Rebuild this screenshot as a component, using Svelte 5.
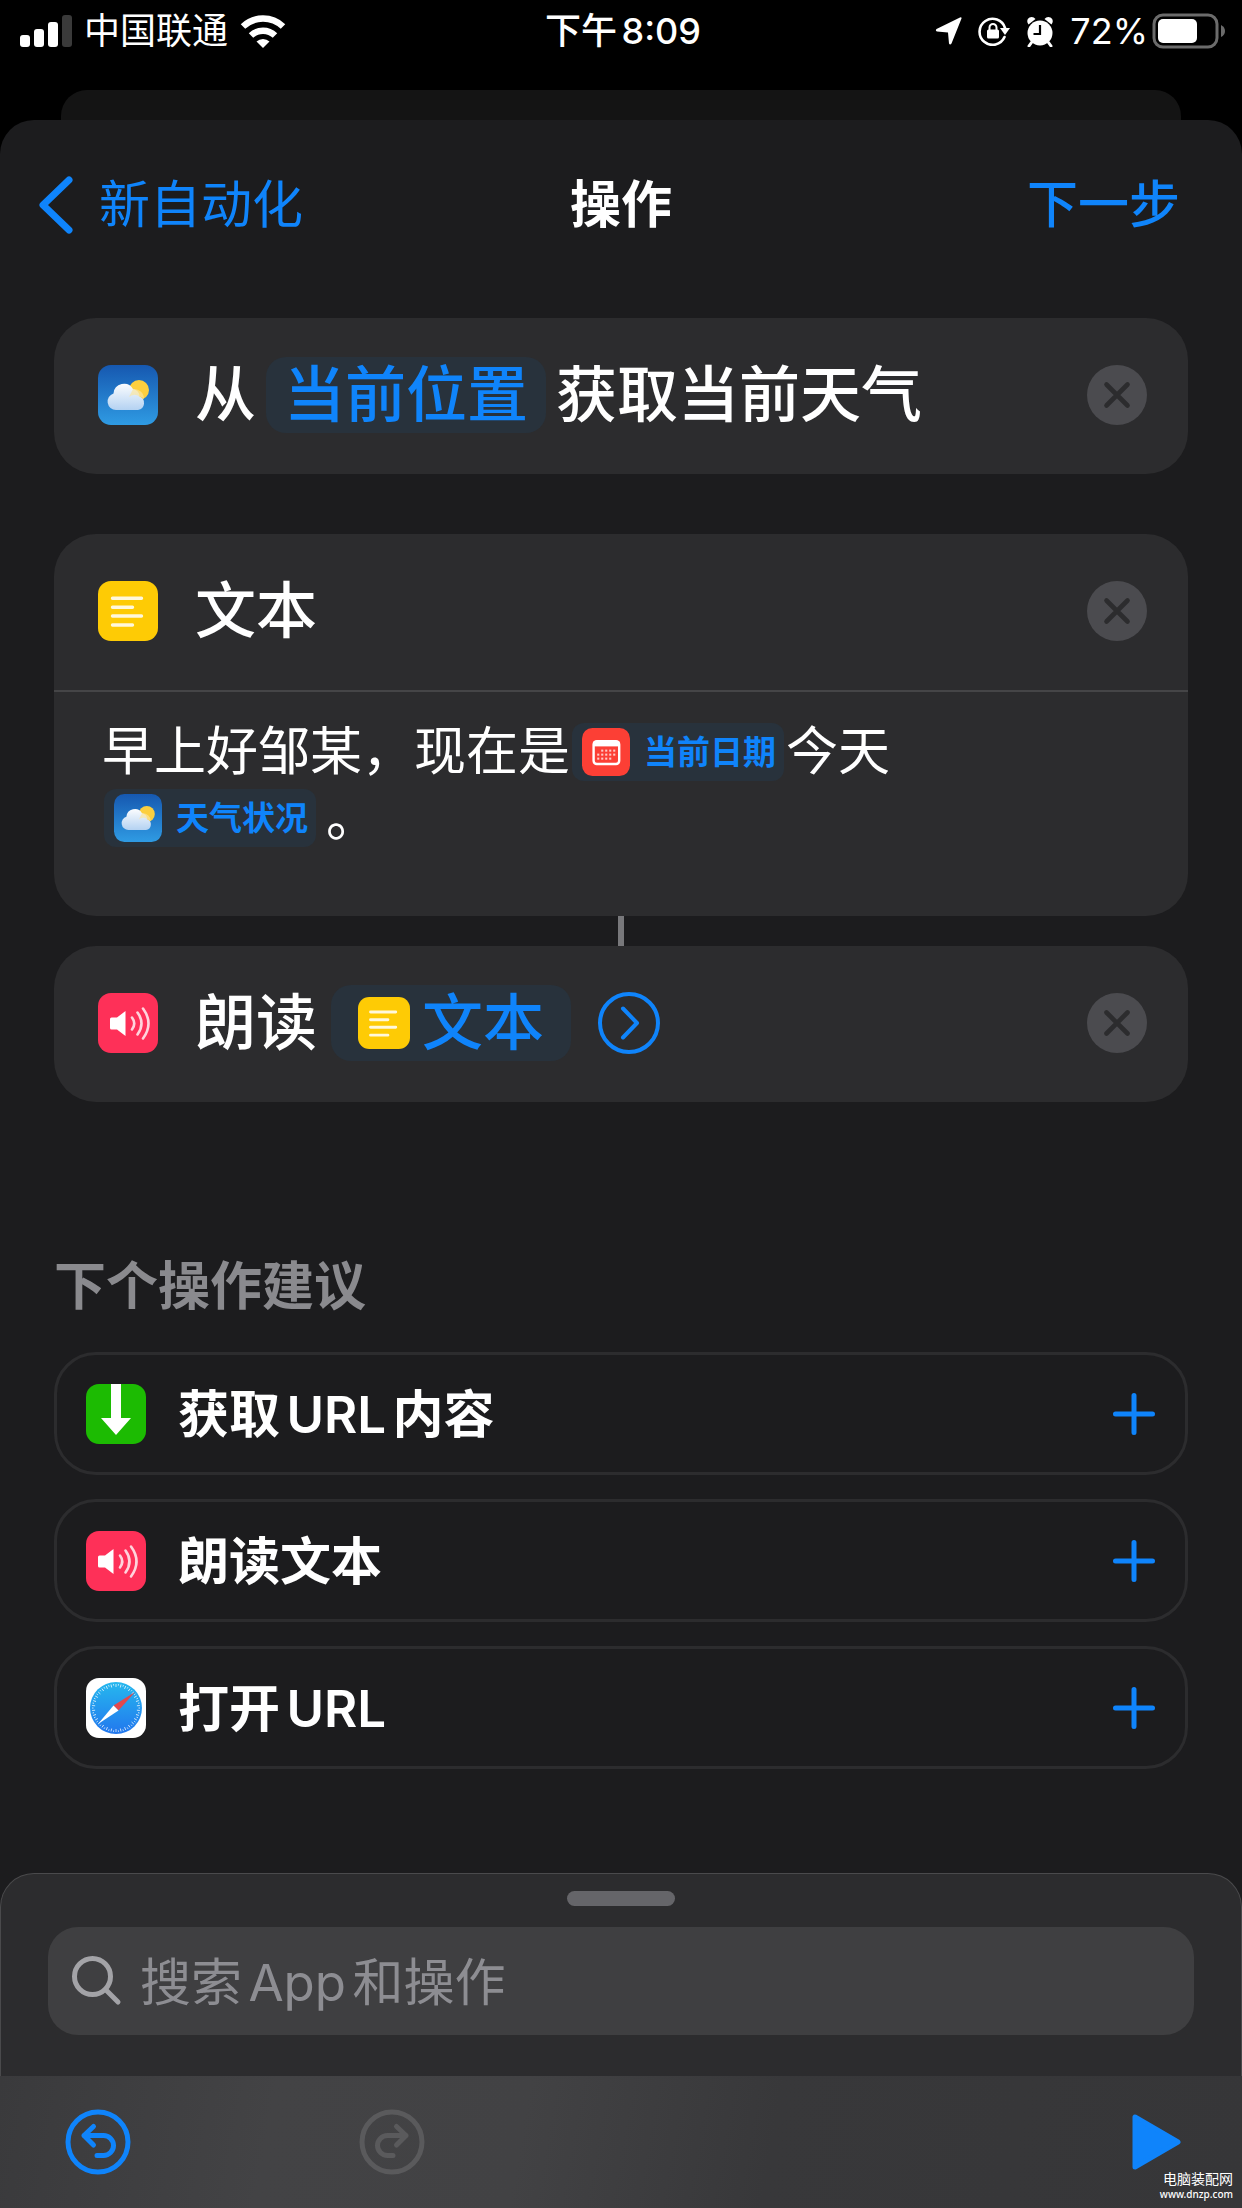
<script lang="ts">
  type Suggestion = { id: string; icon: string; label: string };

  const suggestions: Suggestion[] = [
    { id: "fetch", icon: "download", label: "获取URL内容" },
    { id: "speak", icon: "speaker", label: "朗读文本" },
    { id: "open", icon: "safari", label: "打开URL" },
  ];

  const ticks = Array.from({ length: 60 }, (_, i) => i * 6);

  // calendar day dots, first and last weeks are partial
  const days = [
    [1, 0], [2, 0], [3, 0], [4, 0],
    [0, 1], [1, 1], [2, 1], [3, 1], [4, 1],
    [0, 2], [1, 2], [2, 2], [3, 2],
  ];

  let query = $state("");
</script>

{#snippet appIcon(name: string)}
  <svg class="app-icon" viewBox="0 0 60 60" aria-hidden="true">
    {#if name === "weather"}
      <defs>
        <linearGradient id="sky" x1="0" y1="0" x2="0" y2="1">
          <stop offset="0" stop-color="#1658b0" />
          <stop offset="1" stop-color="#2f9be3" />
        </linearGradient>
        <linearGradient id="cloud" x1="0" y1="0" x2="0" y2="1">
          <stop offset="0" stop-color="#fbfcfe" />
          <stop offset="1" stop-color="#b4d2f2" />
        </linearGradient>
      </defs>
      <rect width="60" height="60" rx="13" fill="url(#sky)" />
      <circle cx="41" cy="25" r="10" fill="#fccf3f" />
      <path
        d="M18 45a8.500 8.500 0 0 1-2.500-16.600 10.500 10.500 0 0 1 19.500-4.400 8 8 0 0 1 6.500 7.500A7 7 0 0 1 40 45z"
        fill="url(#cloud)"
      />
      <path d="M31 32a8 8 0 0 1 10.500-.5A7 7 0 0 1 46 34a10 10 0 0 0-11-10z" fill="#fbe6a0" opacity="0.7" />
    {:else if name === "text"}
      <rect width="60" height="60" rx="13" fill="#fecb05" />
      <path
        d="M14.500 17.200h29M14.500 26.200h20M14.500 35h29M14.500 44h20"
        stroke="#fff8dc"
        stroke-width="3.400"
        stroke-linecap="round"
      />
    {:else if name === "speaker"}
      <rect width="60" height="60" rx="13" fill="#fe3058" />
      <path d="M12 26q0-1.500 1.500-1.500H19l8.500-6.500v25L19 36.500h-5.500Q12 36.500 12 35z" fill="#fff" />
      <path
        d="M34 24.500q4.500 6 0 12M39.500 19.500q8 11 0 22M45 15.500q11 15 0 30"
        fill="none"
        stroke="#ffd3dc"
        stroke-width="2.600"
        stroke-linecap="round"
      />
    {:else if name === "calendar"}
      <rect width="60" height="60" rx="13" fill="#fc3f35" />
      <rect x="14.500" y="16.500" width="32" height="28.500" rx="4" fill="none" stroke="#fff" stroke-width="3" />
      <path d="M14 17h33v6H14z" fill="#fff" />
      {#each days as [x, y]}
        <rect x={19 + x * 5} y={27 + y * 5} width="2.600" height="2.600" fill="#ffc9c5" />
      {/each}
    {:else if name === "download"}
      <rect width="60" height="60" rx="13" fill="#1cbb02" />
      <path d="M25 0h10v34h10L30 51 15 34h10z" fill="#fff" />
    {:else}
      <defs>
        <linearGradient id="dial" x1="0" y1="0" x2="0" y2="1">
          <stop offset="0" stop-color="#26b8ee" />
          <stop offset="1" stop-color="#2277ee" />
        </linearGradient>
      </defs>
      <rect width="60" height="60" rx="13" fill="#fff" />
      <circle cx="30" cy="30" r="26" fill="url(#dial)" />
      {#each ticks as a, i}
        <path
          d="M30 6v{i % 2 ? 1.500 : 3}"
          stroke="#fff"
          stroke-width="0.700"
          transform="rotate({a} 30 30)"
        />
      {/each}
      <path d="M49 14 32.500 32.500l-5-5z" fill="#e2484e" />
      <path d="M12 46l15.500-18.500 5 5z" fill="#fff" />
    {/if}
  </svg>
{/snippet}

{#snippet removeButton(label: string)}
  <button class="remove" type="button" aria-label={label}>
    <svg viewBox="0 0 60 60" aria-hidden="true">
      <circle cx="30" cy="30" r="30" fill="#4b4b4f" />
      <path d="M19.500 19.500l21 21m0-21l-21 21" stroke="#2c2c2e" stroke-width="4.600" stroke-linecap="round" />
    </svg>
  </button>
{/snippet}

<div class="screen">
  <header class="status">
    <div class="status-left">
      <svg width="52" height="34" viewBox="0 0 52 34" aria-hidden="true">
        <g fill="#fff">
          <rect y="21" width="10" height="12" rx="3" />
          <rect x="14" y="15" width="10" height="18" rx="3" />
          <rect x="28" y="8" width="10" height="25" rx="3" />
        </g>
        <rect x="42" y="1" width="10" height="32" rx="3" fill="#3a3a3a" />
      </svg>
      <span>中国联通</span>
      <svg width="46" height="34" viewBox="0 0 46 34" aria-hidden="true">
        <path d="M23 34l-6.500-6.500a9.500 9.500 0 0 1 13 0z" fill="#fff" />
        <path d="M11 21.500a17.500 17.500 0 0 1 24 0M3 12.500a29 29 0 0 1 40 0" fill="none" stroke="#fff" stroke-width="6.500" />
      </svg>
    </div>
    <time class="clock">下午8:09</time>
    <div class="status-right">
      <svg width="27" height="28" viewBox="0 0 27 28" aria-hidden="true">
        <path d="M26.500 1.500 16.500 26.500q-1.500 2-2.500 0l-1-11-11-1q-2-.8-.5-2.500L25 .5q1.800-.7 1.500 1z" fill="#fff" />
      </svg>
      <svg width="32" height="30" viewBox="0 0 32 30" aria-hidden="true">
        <path d="M26.500 21A13 13 0 1 1 27 12" fill="none" stroke="#fff" stroke-width="2.600" stroke-linecap="round" />
        <path d="M22 12h10l-5 7z" fill="#fff" />
        <rect x="9" y="13.500" width="12" height="9" rx="1.500" fill="#fff" />
        <path d="M11.500 14v-2.500a3.500 3.500 0 0 1 7 0V14" fill="none" stroke="#fff" stroke-width="2" />
      </svg>
      <svg width="28" height="31" viewBox="0 0 28 31" aria-hidden="true">
        <circle cx="14" cy="17" r="12.500" fill="#fff" />
        <path d="M2.500 8.500Q-.5 4 3.500 1.500 7 0 9.500 3M25.500 8.500q3-4.500-1-7-3.500-1.500-6 1.500" fill="#fff" />
        <path d="M5.500 26.500 3 30M22.500 26.500 25 30" stroke="#fff" stroke-width="3" stroke-linecap="round" />
        <path d="M14 9v9H7.500" fill="none" stroke="#000" stroke-width="2.200" />
      </svg>
      <span class="percent">72%</span>
      <svg width="74" height="36" viewBox="0 0 74 36" aria-hidden="true">
        <rect x="2" y="2" width="63" height="32" rx="9" fill="none" stroke="#6b6b6b" stroke-width="3" />
        <rect x="6" y="6" width="39" height="24" rx="5" fill="#fff" />
        <path d="M69 12q4 2 4 6t-4 6z" fill="#6b6b6b" />
      </svg>
    </div>
  </header>

  <div class="sheet-behind"></div>

  <main class="sheet">
    <nav class="nav">
      <button class="back" type="button">
        <svg width="34" height="58" viewBox="0 0 34 58" aria-hidden="true">
          <path d="M30 4 4 29l26 25" fill="none" stroke="currentColor" stroke-width="7" stroke-linecap="round" stroke-linejoin="round" />
        </svg>
        新自动化
      </button>
      <h1>操作</h1>
      <button class="next" type="button">下一步</button>
    </nav>

    <section class="actions">
      <article class="card">
        <div class="card-row">
          {@render appIcon("weather")}
          <div class="phrase">
            <span>从</span>
            <button class="chip" type="button">当前位置</button>
            <span>获取当前天气</span>
          </div>
          {@render removeButton("移除天气操作")}
        </div>
      </article>

      <article class="card spaced">
        <div class="card-row">
          {@render appIcon("text")}
          <div class="phrase">
            <span>文本</span>
          </div>
          {@render removeButton("移除文本操作")}
        </div>
        <p class="card-body">
          早上好邹某，现在是<button class="token" type="button">{@render appIcon("calendar")}当前日期</button>今天<br />
          <button class="token last" type="button">{@render appIcon("weather")}天气状况</button>。
        </p>
      </article>

      <div class="connector"></div>

      <article class="card">
        <div class="card-row">
          {@render appIcon("speaker")}
          <div class="phrase">
            <span>朗读</span>
            <button class="chip with-icon" type="button">{@render appIcon("text")}文本</button>
            <button class="expand" type="button" aria-label="展开">
              <svg width="62" height="62" viewBox="0 0 62 62" aria-hidden="true">
                <circle cx="31" cy="31" r="29" />
                <path d="M25 16.500 39 31 25 45.500" />
              </svg>
            </button>
          </div>
          {@render removeButton("移除朗读操作")}
        </div>
      </article>
    </section>

    <section class="suggestions">
      <h2>下个操作建议</h2>
      <ul>
        {#each suggestions as s (s.id)}
          <li>
            <button class="suggestion" type="button">
              {@render appIcon(s.icon)}
              <span>{s.label}</span>
              <svg class="plus" width="42" height="42" viewBox="0 0 42 42" aria-hidden="true">
                <path d="M21 2.500v37M2.500 21h37" />
              </svg>
            </button>
          </li>
        {/each}
      </ul>
    </section>

    <section class="drawer">
      <div class="grabber"></div>
      <label class="search">
        <svg width="50" height="50" viewBox="0 0 50 50" aria-hidden="true">
          <circle cx="20.500" cy="20.500" r="18" />
          <path d="M33.500 33.500 46 46" />
        </svg>
        <input type="text" placeholder="搜索App和操作" aria-label="搜索App和操作" bind:value={query} />
      </label>
    </section>

    <footer class="toolbar">
      <button class="tool undo" type="button" aria-label="撤销">
        <svg width="66" height="66" viewBox="0 0 66 66" aria-hidden="true">
          <circle cx="33" cy="33" r="30" />
          <path d="M28.500 17.500 19 26.500l9.500 9.500M19 26.500h19.500a10 10 0 0 1 0 20H32" />
        </svg>
      </button>
      <button class="tool redo" type="button" aria-label="重做" disabled>
        <svg width="66" height="66" viewBox="0 0 66 66" aria-hidden="true">
          <circle cx="33" cy="33" r="30" />
          <path d="M37.500 17.500 47 26.500l-9.500 9.500M47 26.500H28.500a10 10 0 0 0 0 20H34" />
        </svg>
      </button>
      <button class="tool play" type="button" aria-label="运行">
        <svg width="50" height="56" viewBox="0 0 50 56" aria-hidden="true">
          <path d="M3 3v50l43-25z" fill="currentColor" stroke="currentColor" stroke-width="5" stroke-linejoin="round" />
        </svg>
      </button>
      <div class="watermark">
        <span>电脑装配网</span>
        <small>www.dnzp.com</small>
      </div>
    </footer>
  </main>
</div>

<style>
  :global(body) {
    background: #000;
  }

  .screen {
    --blue: #0f84fb;
    --card: #2c2c2e;
    --sheet: #1c1c1e;
    display: flex;
    flex-direction: column;
    min-height: 100vh;
    color: #fff;
    font-family: Inter, "Noto Sans CJK SC", sans-serif;
    font-size: 52px;
    line-height: 66px;
    text-autospace: normal;
  }

  button {
    display: inline-flex;
    align-items: center;
    padding: 0;
    border: 0;
    background: none;
    color: var(--blue);
    font: inherit;
    text-autospace: inherit;
    cursor: pointer;
  }

  svg {
    display: block;
    flex: none;
  }

  h1,
  h2,
  p,
  ul {
    margin: 0;
    padding: 0;
  }

  .app-icon {
    width: 60px;
    height: 60px;
  }

  .status {
    display: grid;
    grid-template-columns: 1fr auto 1fr;
    align-items: center;
    height: 62px;
    padding: 0 16px 0 20px;
    margin-bottom: 28px;
    font-size: 36px;
    line-height: 60px;
  }

  .status-left,
  .status-right {
    display: flex;
    align-items: center;
    gap: 12px;
  }

  .status-right {
    justify-content: flex-end;
    gap: 16px;
  }

  .clock {
    font-weight: 500;
  }

  .percent {
    margin-right: -12px;
  }

  .sheet-behind {
    height: 30px;
    margin: 0 61px;
    border-radius: 26px 26px 0 0;
    background: #141414;
  }

  .sheet {
    flex: 1;
    display: flex;
    flex-direction: column;
    border-radius: 34px 34px 0 0;
    background: var(--sheet);
  }

  .nav {
    display: grid;
    grid-template-columns: 1fr auto 1fr;
    align-items: center;
    height: 170px;
    padding: 0 62px;
    font-size: 51px;
  }

  .back {
    justify-self: start;
    gap: 26px;
    margin-left: -23px;
  }

  h1 {
    font-size: 51px;
    font-weight: 700;
  }

  .next {
    justify-self: end;
    font-weight: 500;
  }

  .actions {
    padding: 28px 54px 0;
  }

  .card {
    border-radius: 42px;
    background: var(--card);
  }

  .card.spaced {
    margin-top: 60px;
  }

  .card-row {
    display: flex;
    align-items: center;
    box-sizing: border-box;
    height: 156px;
    padding: 0 41px 2px 44px;
  }

  .phrase {
    flex: 1;
    display: flex;
    align-items: center;
    gap: 10px;
    margin-left: 37px;
    font-size: 61px;
    line-height: 76px;
    font-weight: 500;
  }

  .chip {
    height: 76px;
    padding: 0 18px;
    border-radius: 20px;
    background: #28323c;
  }

  .with-icon {
    gap: 12px;
    padding: 0 27px;
    margin: 0 17px 0 4px;
  }

  .with-icon .app-icon {
    width: 52px;
    height: 52px;
  }

  .expand svg {
    fill: none;
    stroke: currentColor;
    stroke-width: 4;
    stroke-linecap: round;
    stroke-linejoin: round;
  }

  .remove svg {
    width: 60px;
    height: 60px;
  }

  .card-body {
    padding: 27px 48px 65px;
    border-top: 2px solid #454547;
  }

  .token {
    height: 58px;
    margin: 4px 2px;
    padding: 0 8px 0 10px;
    gap: 14px;
    border-radius: 12px;
    background: #28323c;
    vertical-align: top;
    font-size: 33px;
    font-weight: 600;
  }

  .token.last {
    margin-right: 10px;
  }

  .token .app-icon {
    width: 48px;
    height: 48px;
  }

  .connector {
    width: 6px;
    height: 30px;
    margin: 0 auto;
    background: #78787b;
  }

  .suggestions {
    padding: 152px 54px 104px;
  }

  h2 {
    margin-bottom: 32px;
    color: #8a8a8e;
    font-size: 52px;
    font-weight: 600;
  }

  ul {
    display: grid;
    gap: 24px;
    list-style: none;
  }

  .suggestion {
    width: 100%;
    height: 123px;
    padding: 0 30px 0 29px;
    border: 3px solid #2c2c2e;
    border-radius: 42px;
    color: #fff;
    font-size: 51px;
    font-weight: 600;
  }

  .suggestion span {
    flex: 1;
    margin-left: 32px;
    padding-top: 2px;
    text-align: left;
  }

  .plus {
    stroke: var(--blue);
    stroke-width: 5;
    stroke-linecap: round;
  }

  .drawer {
    margin-top: auto;
    padding: 17px 47px 41px;
    border: 1px solid #4a4a4c;
    border-bottom: 0;
    border-radius: 34px 34px 0 0;
    background: var(--card);
  }

  .grabber {
    width: 108px;
    height: 15px;
    margin: 0 auto 21px;
    border-radius: 8px;
    background: #656569;
  }

  .search {
    display: flex;
    align-items: center;
    gap: 18px;
    height: 108px;
    padding: 0 24px;
    border-radius: 30px;
    background: #3f3f41;
    font-size: 51px;
  }

  .search svg {
    fill: none;
    stroke: #a3a3a7;
    stroke-width: 5;
    stroke-linecap: round;
  }

  .search input {
    flex: 1;
    min-width: 0;
    padding: 4px 0 0;
    border: 0;
    outline: 0;
    background: none;
    color: #fff;
    font: inherit;
    text-autospace: inherit;
  }

  .search input::placeholder {
    color: #8d8d92;
    opacity: 1;
  }

  .toolbar {
    position: relative;
    display: flex;
    align-items: center;
    height: 132px;
    padding: 0 60px 0 65px;
    background: linear-gradient(100deg, #3a3a3c 0, #434345 22%, #424244 42%, #38383a 62%, #363638 100%);
  }

  .tool svg {
    fill: none;
    stroke: currentColor;
    stroke-width: 5;
    stroke-linecap: round;
    stroke-linejoin: round;
  }

  .redo {
    margin-left: 228px;
    color: #5a5a5c;
  }

  .play {
    margin-left: auto;
  }

  .watermark {
    position: absolute;
    right: 9px;
    bottom: 7px;
    display: grid;
    font-size: 14px;
    line-height: 16px;
    text-align: right;
  }

  .watermark small {
    font: 500 10px/14px "Noto Sans", sans-serif;
  }
</style>
